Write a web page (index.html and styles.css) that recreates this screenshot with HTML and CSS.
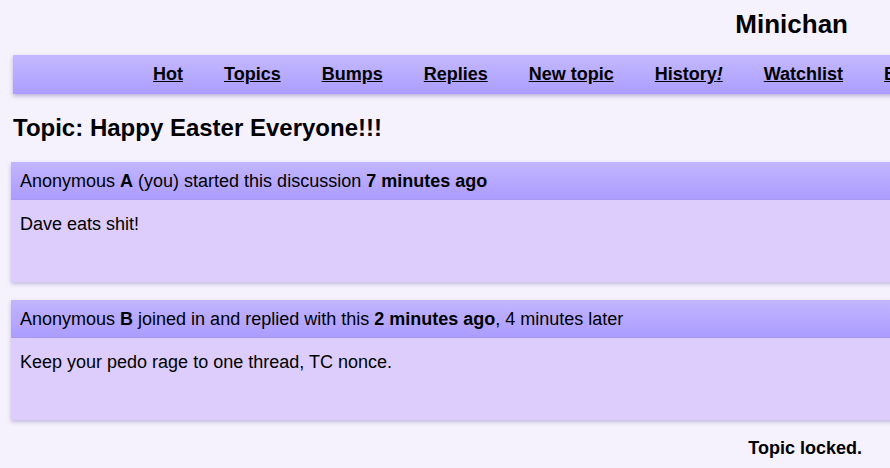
FILE: index.html
```html
<!DOCTYPE html>
<html>
<head>
<meta charset="utf-8">
<title>Minichan</title>
<link rel="stylesheet" href="styles.css">
</head>
<body>
<div class="page">
  <header class="site-head">
    <h1 class="logo">Minichan</h1>
  </header>
  <nav class="menu">
    <a href="#">Hot</a>
    <a href="#">Topics</a>
    <a href="#">Bumps</a>
    <a href="#">Replies</a>
    <a href="#">New topic</a>
    <a href="#">History<em>!</em></a>
    <a href="#">Watchlist</a>
    <a href="#">Bulletins</a>
    <a href="#">Search</a>
  </nav>
  <h2 class="topic-title">Topic: Happy Easter Everyone!!!</h2>
  <article class="post">
    <div class="post-head">Anonymous <strong>A</strong> (you) started this discussion <strong>7 minutes ago</strong></div>
    <div class="post-body">Dave eats shit!</div>
  </article>
  <article class="post">
    <div class="post-head">Anonymous <strong>B</strong> joined in and replied with this <strong>2 minutes ago</strong>, 4 minutes later</div>
    <div class="post-body">Keep your pedo rage to one thread, TC nonce.</div>
  </article>
  <p class="locked">Topic locked.</p>
</div>
</body>
</html>
```
FILE: styles.css
```css
html, body {
  margin: 0;
  padding: 0;
  overflow: hidden;
  background: #f5f1fd;
}
body {
  font-family: "Liberation Sans", Arial, sans-serif;
  color: #000;
}
.page {
  width: 1100px;
  padding: 0 0 0 11px;
}
.site-head {
  width: 879px;
  display: flex;
  justify-content: flex-end;
  height: 48px;
  align-items: center;
}
.logo {
  margin: 0 42px 0 0;
  font-size: 26px;
  font-weight: bold;
}
.menu {
  margin: 7px 0 0 2px;
  height: 39px;
  display: flex;
  align-items: center;
  gap: 41px;
  padding-left: 140px;
  background: linear-gradient(#c4b9ff, #ab9dff);
  box-shadow: 0 2px 4px rgba(80, 60, 140, 0.35);
}
.menu a {
  color: #000;
  font-size: 18px;
  font-weight: bold;
  text-decoration: underline;
}
.menu em {
  font-style: italic;
}
.topic-title {
  margin: 20px 0 0 2px;
  font-size: 24px;
  font-weight: bold;
  line-height: 28px;
}
.post {
  margin-top: 20px;
  box-shadow: 0 2px 4px rgba(80, 60, 140, 0.3);
}
.post + .post {
  margin-top: 18px;
}
.post-head {
  height: 38px;
  line-height: 38px;
  padding-left: 9px;
  font-size: 18px;
  background: linear-gradient(#c2b6ff, #ab9cff);
  border-bottom: 1px solid #a898f0;
  box-sizing: border-box;
}
.post-body {
  height: 82px;
  padding: 13px 9px 0;
  box-sizing: border-box;
  font-size: 18px;
  line-height: 22px;
  background: #dccdfd;
}
.locked {
  width: 851px;
  text-align: right;
  margin: 18px 0 0;
  font-size: 18px;
  font-weight: bold;
}
```
